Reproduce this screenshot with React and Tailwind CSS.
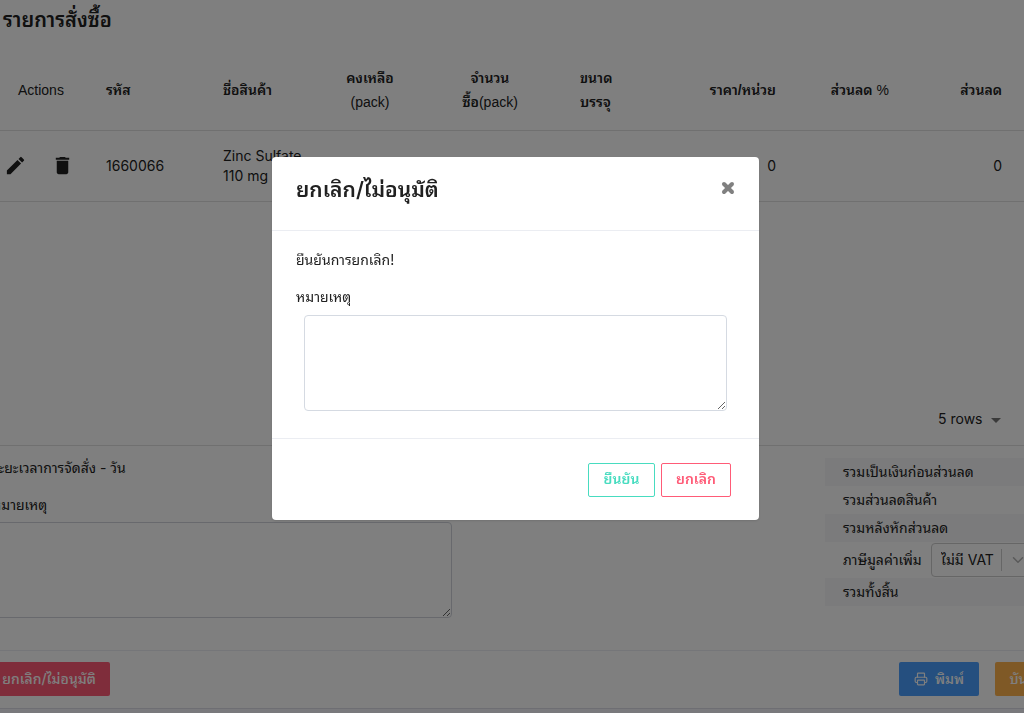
import React from 'react';
import { MdEdit, MdDelete, MdArrowDropDown } from 'react-icons/md';
import { FiChevronDown } from 'react-icons/fi';
import { Printer, X } from 'lucide-react';

const columns = [
  { lines: ['Actions'], className: 'w-[90px] pl-[18px] text-left font-normal' },
  { lines: ['รหัส'], className: 'w-[117px] pl-4 text-left font-semibold' },
  { lines: ['ชื่อสินค้า'], className: 'pl-4 text-left font-semibold' },
  { lines: ['คงเหลือ'], unit: '(pack)', className: 'w-[120px] text-center font-semibold' },
  { lines: ['จำนวน', 'ซื้อ'], unit: '(pack)', className: 'w-[120px] text-center font-semibold' },
  { lines: ['ขนาด', 'บรรจุ'], className: 'w-[130px] pl-[30px] text-left font-semibold' },
  { lines: ['ราคา/หน่วย'], className: 'w-[112px] pr-4 text-right font-semibold' },
  { lines: ['ส่วนลด'], unit: '%', inline: true, className: 'w-[113px] pr-4 text-right font-semibold' },
  { lines: ['ส่วนลด'], className: 'w-[119px] pr-[22px] text-right font-semibold' },
];

function HeaderText({ column }) {
  const unit = column.unit && <span className="font-normal">{column.unit}</span>;
  if (column.inline) {
    return <>{column.lines[0]} {unit}</>;
  }
  return (
    <>
      {column.lines[0]}
      {(column.lines[1] || column.unit) && <br />}
      {column.lines[1]}
      {unit}
    </>
  );
}

function OrderTable() {
  return (
    <table className="w-full table-fixed border-collapse text-sm">
      <thead>
        <tr className="h-[80px] border-b border-[#e0e0e0] font-['Liberation_Sans','Noto_Sans_Thai_Looped','Loma',sans-serif] leading-6">
          {columns.map((column, i) => (
            <th key={i} className={column.className}>
              <HeaderText column={column} />
            </th>
          ))}
        </tr>
      </thead>
      <tbody>
        <tr className="h-[71px] border-b border-[#e0e0e0] leading-5">
          <td>
            <div className="flex items-center gap-6 pl-1">
              <button type="button" aria-label="Edit"><MdEdit className="size-[23px]" /></button>
              <button type="button" aria-label="Delete"><MdDelete className="size-[23px]" /></button>
            </div>
          </td>
          <td className="pl-4">1660066</td>
          <td className="pl-4">Zinc Sulfate 110 mg</td>
          <td className="text-center">0</td>
          <td className="text-center">1</td>
          <td className="pl-[30px]">100 (1)</td>
          <td className="pr-4 text-right">0</td>
          <td />
          <td className="pr-[22px] text-right">0</td>
        </tr>
      </tbody>
    </table>
  );
}

function Summary() {
  return (
    <div className="w-[199px] text-sm">
      <div className="flex h-7 items-center bg-[#f7f7f8] pl-[18px]">รวมเป็นเงินก่อนส่วนลด</div>
      <div className="flex h-7 items-center pl-[18px]">รวมส่วนลดสินค้า</div>
      <div className="flex h-7 items-center bg-[#f7f7f8] pl-[18px]">รวมหลังหักส่วนลด</div>
      <div className="flex h-9 items-center gap-2 overflow-hidden pl-[18px]">
        <label htmlFor="vat" className="w-20 shrink-0 whitespace-nowrap">ภาษีมูลค่าเพิ่ม</label>
        <div className="relative h-[34px] w-[110px] shrink-0">
          <select id="vat" className="size-full appearance-none rounded border border-[#cccccc] bg-white pl-[9px]">
            <option>ไม่มี VAT</option>
          </select>
          <span className="pointer-events-none absolute inset-y-1.5 left-[70px] w-px bg-[#cccccc]" />
          <FiChevronDown className="pointer-events-none absolute top-2 left-[78px] size-[18px] text-[#b3b3b3]" />
        </div>
      </div>
      <div className="flex h-7 items-center bg-[#f7f7f8] pl-[18px]">รวมทั้งสิ้น</div>
    </div>
  );
}

function CancelModal() {
  return (
    <div className="fixed inset-0 flex items-start justify-center bg-black/50 pt-[157px] pl-[7px]">
      <div role="dialog" aria-modal="true" aria-labelledby="cancel-title" className="w-[487px] rounded bg-white shadow">
        <div className="flex h-[74px] items-start justify-between border-b border-[#ebedf2] pt-4 pr-[23px] pl-6">
          <h5 id="cancel-title" className="text-[21px] leading-[34px] font-semibold">ยกเลิก/ไม่อนุมัติ</h5>
          <button type="button" aria-label="Close" className="mt-[7px] text-[#808080]">
            <X className="size-4" strokeWidth={6} />
          </button>
        </div>
        <div className="h-[208px] border-b border-[#ebedf2] px-6 pt-[19px] text-sm">
          <p className="leading-5">ยืนยันการยกเลิก!</p>
          <label htmlFor="reason" className="mt-[15px] block leading-6">หมายเหตุ</label>
          <div className="mt-1.5 px-2">
            <textarea id="reason" className="block h-24 w-full rounded border border-[#d5dae2]" />
          </div>
        </div>
        <div className="flex justify-end gap-1.5 px-7 pt-6 pb-[23px] text-sm font-semibold">
          <button type="button" className="h-[34px] w-[67px] rounded-xs border border-[#48dcc0] pb-0.5 text-[#48dcc0]">ยืนยัน</button>
          <button type="button" className="h-[34px] w-[70px] rounded-xs border border-[#ff5b77] pb-0.5 text-[#ff5b77]">ยกเลิก</button>
        </div>
      </div>
    </div>
  );
}

export default function App() {
  return (
    <div className="min-h-screen overflow-hidden bg-[#f2f3f8] font-['Inter','Noto_Sans_Thai_Looped','Loma',sans-serif] text-[#212121]">
      <main className="border-b border-[#dcdde6] bg-white">
        <h3 className="h-[50px] pt-1 pl-[3px] text-[20px] leading-8 font-semibold">รายการสั่งซื้อ</h3>
        <OrderTable />
        <div className="flex h-[244px] items-end justify-end border-b border-[#e0e0e0] pr-5 pb-3.5">
          <div className="relative">
            <select aria-label="Rows per page" className="h-6 w-[66px] appearance-none text-sm">
              <option>5 rows</option>
            </select>
            <MdArrowDropDown className="pointer-events-none absolute top-0.5 -right-1 size-6 text-[#757575]" />
          </div>
        </div>
        <div className="flex h-[205px] justify-between border-b border-[#ebedf2] pt-3">
          <div className="-ml-2 w-[460px] text-sm">
            <p className="leading-5">ระยะเวลาการจัดสั่ง - วัน</p>
            <label htmlFor="note" className="mt-[15px] block leading-6">หมายเหตุ</label>
            <textarea id="note" className="mt-[5px] block h-24 w-full rounded border border-[#d0d3da]" />
          </div>
          <Summary />
        </div>
        <div className="flex h-[57px] items-start justify-between pt-[11px] text-sm font-medium text-white">
          <button type="button" className="-ml-3 h-[34px] w-[122px] rounded-xs bg-[#ff5b77]">ยกเลิก/ไม่อนุมัติ</button>
          <div className="-mr-9 flex gap-4">
            <button type="button" className="flex h-[34px] w-20 items-center justify-center gap-[7px] rounded-xs bg-[#4a9fff]">
              <Printer className="size-3.5" />
              พิมพ์
            </button>
            <button type="button" className="h-[34px] w-[65px] rounded-xs bg-[#ffb24d]">บันทึก</button>
          </div>
        </div>
      </main>
      <CancelModal />
    </div>
  );
}
